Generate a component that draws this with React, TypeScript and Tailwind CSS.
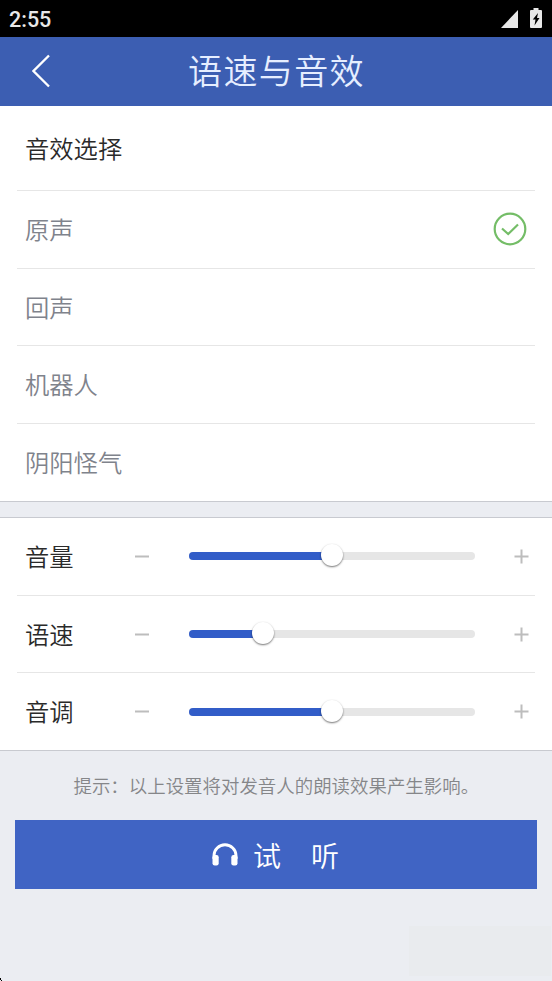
const OPTIONS = [
  { name: '原声', height: 'h-[78px]', selected: true },
  { name: '回声', height: 'h-[77px]' },
  { name: '机器人', height: 'h-[78px]' },
  { name: '阴阳怪气', height: 'h-[77px]' },
];

const SLIDERS = [
  { name: '音量', value: 50, height: 'h-[78px] pb-px' },
  { name: '语速', value: 25.7, height: 'h-[77px]' },
  { name: '音调', value: 50, height: 'h-[77px]' },
];

function StatusBar() {
  return (
    <div className="flex h-[37px] items-center bg-black pr-[10px] pl-[9px] text-[#e8e8e8]">
      <span className="grow pt-[2px] font-[Roboto,sans-serif] text-[21.5px] leading-none font-medium">2:55</span>
      <svg className="mr-3 h-[18px] w-[17px]" viewBox="0 0 17 18" fill="#e8e8e8">
        <path d="M17 0v18H0z" />
      </svg>
      <svg className="-mt-px h-[20px] w-[12px]" viewBox="0 0 12 20">
        <path d="M3.500 0h5v2h2.500a1 1 0 0 1 1 1v16a1 1 0 0 1-1 1h-10A1 1 0 0 1 0 19V3A1 1 0 0 1 1 2h2.500z" fill="#e8e8e8" />
        <path d="M8 5 2.800 11.500h2.700L4.500 17.500 9.500 10H7z" fill="#000" />
      </svg>
    </div>
  );
}

function Slider({ name, value, height, last }: { name: string; value: number; height: string; last: boolean }) {
  return (
    <div className={`flex items-center ${height} ${last ? '' : 'border-b border-[#e6e6e6]'}`}>
      <span className="w-[118px] pl-2 text-[24.3px] text-[#2a2a2a]">{name}</span>
      <svg className="h-[15px] w-[15px]" viewBox="0 0 15 15" stroke="#bdbdbd" strokeWidth="2">
        <path d="M0 7.500h14" />
      </svg>
      <div className="relative ml-[39px] h-2 w-[286px] rounded-[4px] bg-[#e6e6e6]">
        <div className="h-2 rounded-l-[4px] bg-[#325dc8]" style={{ width: `${value}%` }} />
        <div
          className="absolute -top-[8px] h-[22px] w-[22px] -translate-x-1/2 rounded-full bg-white shadow-[0_1px_2px_rgba(0,0,0,0.55)]"
          style={{ left: `${value}%` }}
        />
      </div>
      <svg className="ml-[39px] h-[15px] w-[15px]" viewBox="0 0 15 15" stroke="#bdbdbd" strokeWidth="2">
        <path d="M0.500 7.500h14M7.500 0.500v14" />
      </svg>
    </div>
  );
}

export default function App() {
  return (
    <div className="flex h-[981px] w-[552px] flex-col overflow-hidden bg-[#ebedf2] font-['Noto_Sans_CJK_SC',sans-serif] leading-none font-[350]">
      <StatusBar />
      <header className="flex h-[69px] items-center bg-[#3c5eb2] pb-[2px] pl-8 text-white">
        <svg className="h-[34px] w-[20px]" viewBox="0 0 20 34" fill="none" stroke="#fff" strokeWidth="2.300">
          <path d="M17 1.500 1.500 17 17 32.500" />
        </svg>
        <h1 className="-mt-px ml-[136px] text-[34px] font-[350] tracking-[1.400px] text-[#e6eeff]">语速与音效</h1>
      </header>

      <section className="border-b border-[#c8cad0] bg-white pr-[17px] pl-[17px]">
        <h2 className="flex h-[85px] items-center border-b border-[#e6e6e6] pl-2 text-[24.3px] font-[350] text-[#2a2a2a]">音效选择</h2>
        {OPTIONS.map((option, i) => (
          <div
            key={option.name}
            className={`flex items-center justify-between pr-2 pl-2 text-[24.3px] text-[#7f838c] ${option.height} ${i < 3 ? 'border-b border-[#e6e6e6]' : ''}`}
          >
            <span>{option.name}</span>
            {option.selected && (
              <svg className="-mt-[2px] h-[34px] w-[34px]" viewBox="0 0 34 34" fill="none" stroke="#74bd67" strokeWidth="2.200">
                <circle cx="17" cy="17" r="15.300" />
                <path d="M9 16.500 15.200 22 25 12.500" />
              </svg>
            )}
          </div>
        ))}
      </section>

      <section className="mt-[15px] border-y border-[#c8cad0] bg-white pr-[17px] pl-[17px]">
        {SLIDERS.map((slider, i) => (
          <Slider key={slider.name} {...slider} last={i === 2} />
        ))}
      </section>

      <p className="flex h-[69px] items-center pl-[73.500px] text-[18.450px] text-[#858689]">
        提示：以上设置将对发音人的朗读效果产生影响。
      </p>
      <button className="mx-[15px] flex h-[69px] w-[522px] items-center bg-[#4064c4] pl-[197px] text-[28px] font-[350] text-white">
        <svg className="h-[23px] w-[26px]" viewBox="0 0 26 23" fill="none">
          <path d="M2 16v-3.500a11 10.700 0 0 1 22 0V16" stroke="#fff" strokeWidth="2.900" />
          <rect x="0.500" y="12" width="6.200" height="10.500" rx="2.200" fill="#fff" />
          <rect x="19.300" y="12" width="6.200" height="10.500" rx="2.200" fill="#fff" />
        </svg>
        <span className="ml-[15px]">试</span>
        <span className="ml-[30px]">听</span>
      </button>
      <div className="mt-auto flex h-[56px] items-start justify-end">
        <div className="mt-px mr-px mb-auto h-[50px] w-[142px] bg-[#e9ebee]" />
      </div>
      <svg className="-mt-[3px] h-[3px] w-[2px] shrink-0" viewBox="0 0 2 3">
        <path d="M0 0h1v2h1v1H1V2H0z" fill="#000" />
      </svg>
    </div>
  );
}
